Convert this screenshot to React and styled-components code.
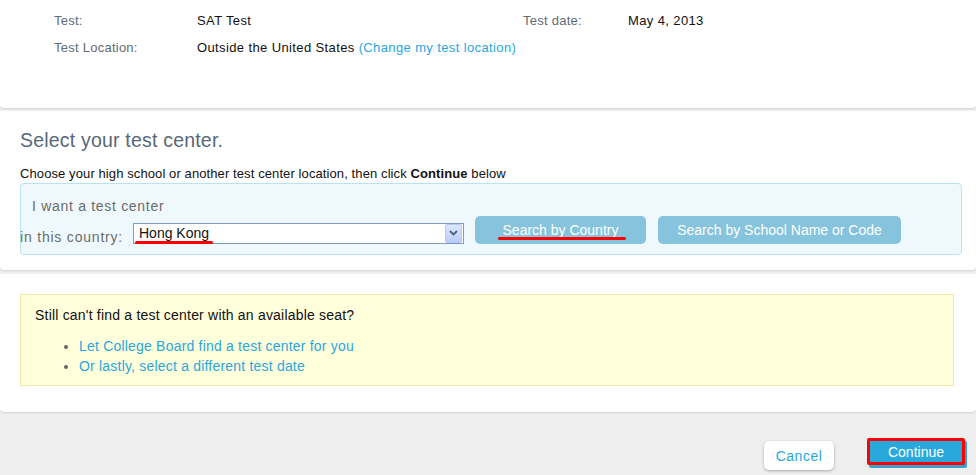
import React from 'react';
import styled, { createGlobalStyle } from 'styled-components';

const GlobalStyle = createGlobalStyle`
  html, body {
    margin: 0;
    padding: 0;
    background: #efefef;
  }
  body {
    font-family: "Liberation Sans", Arial, sans-serif;
    font-size: 13px;
    letter-spacing: 0.25px;
    color: #111;
  }
`;

const Page = styled.div`
  width: 976px;
  height: 475px;
  overflow: hidden;
  background: #efefef;
  display: flex;
  flex-direction: column;
`;

const Panel = styled.section`
  background: #fff;
  border-radius: 0 0 4px 4px;
  box-shadow: 0 1px 2px rgba(0, 0, 0, 0.12);
  height: ${(p) => p.$height}px;
  margin-bottom: ${(p) => p.$gap || 0}px;
  box-sizing: border-box;
  padding: ${(p) => p.$pad};
`;

const InfoGrid = styled.div`
  display: grid;
  grid-template-columns: 143px 326px 105px auto;
  row-gap: 10px;
  line-height: 17px;
`;

const Label = styled.span`
  color: #5f6b78;
`;

const Value = styled.span`
  color: #111;
  letter-spacing: 0.38px;
`;

const Link = styled.a`
  color: #2aa6df;
  text-decoration: none;
  cursor: pointer;
`;

const Heading = styled.h2`
  margin: 0;
  font-size: 19.5px;
  font-weight: normal;
  letter-spacing: 0.2px;
  color: #576879;
  line-height: 24px;
`;

const Intro = styled.p`
  margin: 14px 0 1px;
  line-height: 16px;
  letter-spacing: 0.1px;
  b {
    font-weight: bold;
  }
`;

const SearchBox = styled.div`
  background: #eff9fd;
  border: 1px solid #b9e3f2;
  border-radius: 4px;
  height: 72px;
  box-sizing: border-box;
  padding: 14px 0 0 0;
`;

const BoxTitle = styled.div`
  color: #6b6b6b;
  font-size: 14px;
  letter-spacing: 0.7px;
  padding-left: 11px;
  line-height: 17px;
`;

const SearchRow = styled.div`
  display: flex;
  align-items: center;
`;

const RowLabel = styled.span`
  color: #6b6b6b;
  font-size: 14px;
  letter-spacing: 0.8px;
  width: 113px;
  margin-left: -1px;
  padding-top: 14px;
  white-space: nowrap;
`;

const Select = styled.div`
  position: relative;
  width: 331px;
  height: 21px;
  box-sizing: border-box;
  border: 1px solid #7f9db9;
  background: #fff;
  margin-top: 6px;
  display: flex;
  align-items: center;
  justify-content: space-between;
  padding-left: 5px;
  font-size: 14px;
  letter-spacing: 0;
  color: #111;
`;

const SelectArrow = styled.span`
  width: 15px;
  height: 17px;
  margin-right: 1px;
  border: 1px solid #b4c6f2;
  border-radius: 2px;
  background: linear-gradient(#dde8fd, #b8cdf9);
  display: flex;
  align-items: center;
  justify-content: center;
`;

const Underline = styled.span`
  position: absolute;
  left: ${(p) => p.$left}px;
  top: ${(p) => p.$top}px;
  width: ${(p) => p.$width}px;
  height: 3px;
  border-radius: 2px;
  background: #f00;
`;

const SearchButton = styled.button`
  position: relative;
  height: 28px;
  border: none;
  border-radius: 5px;
  background: #86c3dc;
  color: #fff;
  font-family: "Liberation Sans", Arial, sans-serif;
  font-size: 14px;
  padding: 0;
  width: ${(p) => p.$width}px;
  margin-left: ${(p) => p.$ml}px;
`;

const Notice = styled.div`
  background: #ffffdc;
  border: 1px solid #f0e7a6;
  width: 934px;
  height: 92px;
  box-sizing: border-box;
  padding: 11px 14px;
  font-size: 14px;
  letter-spacing: 0.2px;
  line-height: 18px;
`;

const NoticeList = styled.ul`
  margin: 12px 0 0;
  padding-left: 44px;
  line-height: 20px;
  li::marker {
    color: #666;
  }
`;

const Footer = styled.div`
  display: flex;
  justify-content: flex-end;
  align-items: flex-start;
  padding: 29px 11px 0 0;
`;

const CancelButton = styled.button`
  width: 70px;
  height: 29px;
  border: none;
  border-radius: 5px;
  background: #fff;
  box-shadow: 0 1px 3px rgba(0, 0, 0, 0.3);
  color: #2aa6df;
  font-family: "Liberation Sans", Arial, sans-serif;
  font-size: 14px;
  letter-spacing: 0.5px;
`;

const ContinueButton = styled.button`
  width: 98px;
  height: 27px;
  margin-left: 33px;
  margin-top: -3px;
  border: 3px solid #f00;
  border-radius: 2px;
  background: #29a8db;
  box-shadow: 2px 3px 0 #3aa0cc;
  color: #fff;
  font-family: "Liberation Sans", Arial, sans-serif;
  font-size: 14px;
  padding: 0;
`;

export default function App() {
  return (
    <Page>
      <GlobalStyle />
      <Panel $height={108} $gap={3} $pad="12px 0 0 54px">
        <InfoGrid>
          <Label>Test:</Label>
          <Value>SAT Test</Value>
          <Label>Test date:</Label>
          <Value>May 4, 2013</Value>
          <Label>Test Location:</Label>
          <Value>
            Outside the United States <Link>(Change my test location)</Link>
          </Value>
        </InfoGrid>
      </Panel>

      <Panel $height={159} $gap={4} $pad="17px 14px 0 20px">
        <Heading>Select your test center.</Heading>
        <Intro>
          Choose your high school or another test center location, then click <b>Continue</b> below
        </Intro>
        <SearchBox>
          <BoxTitle>I want a test center</BoxTitle>
          <SearchRow>
            <RowLabel>in this country:</RowLabel>
            <Select>
              Hong Kong
              <SelectArrow>
                <svg width="9" height="6" viewBox="0 0 9 6">
                  <path d="M1 1 L4.5 4.5 L8 1" fill="none" stroke="#4d6185" strokeWidth="1.8" />
                </svg>
              </SelectArrow>
              <Underline $left={1} $top={17} $width={78} />
            </Select>
            <SearchButton $width={171} $ml={11}>
              Search by Country
              <Underline $left={23} $top={21} $width={128} />
            </SearchButton>
            <SearchButton $width={243} $ml={12}>
              Search by School Name or Code
            </SearchButton>
          </SearchRow>
        </SearchBox>
      </Panel>

      <Panel $height={138} $pad="20px 0 0 20px">
        <Notice>
          Still can't find a test center with an available seat?
          <NoticeList>
            <li>
              <Link>Let College Board find a test center for you</Link>
            </li>
            <li>
              <Link>Or lastly, select a different test date</Link>
            </li>
          </NoticeList>
        </Notice>
      </Panel>

      <Footer>
        <CancelButton>Cancel</CancelButton>
        <ContinueButton>Continue</ContinueButton>
      </Footer>
    </Page>
  );
}
